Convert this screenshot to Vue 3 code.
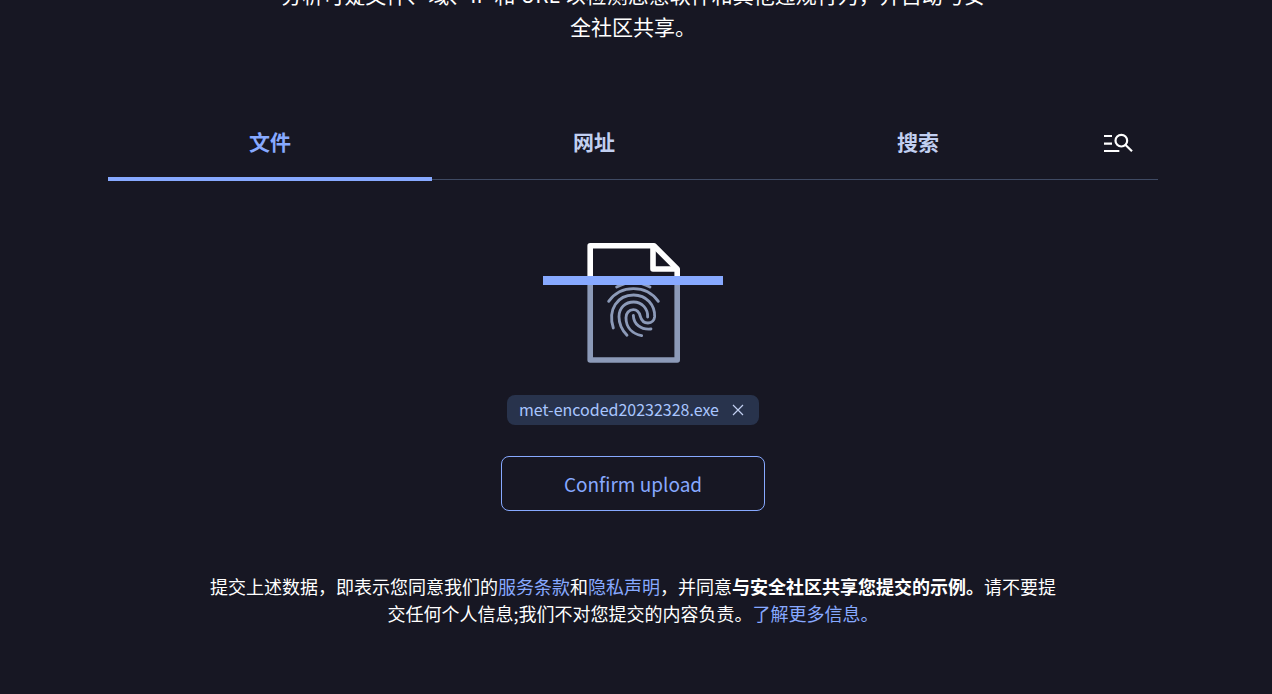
<script setup>
import { ref } from 'vue'

const tabs = ['文件', '网址', '搜索']
const active = ref(0)
const fileName = ref('met-encoded20232328.exe')
</script>

<template>
  <main class="page">
    <p class="intro">分析可疑文件、域、IP 和 URL 以检测恶意软件和其他违规行为，并自动与安全社区共享。</p>

    <nav class="tabs" role="tablist">
      <button
        v-for="(tab, i) in tabs"
        :key="tab"
        type="button"
        role="tab"
        class="tab"
        :class="{ active: active === i }"
        :aria-selected="active === i"
        @click="active = i"
      >{{ tab }}</button>
      <button type="button" class="advanced" aria-label="高级搜索">
        <svg width="30" height="20" viewBox="0 0 90 60" fill="none" stroke="#fff" stroke-width="6.5">
          <path d="M0 9H24M0 32H24M0 54H46" />
          <circle cx="52" cy="23" r="17.5" />
          <path d="M64 35L84 55" />
        </svg>
      </button>
    </nav>

    <section class="upload">
      <svg class="scan" width="180" height="120" viewBox="0 0 180 120" fill="none" stroke-linejoin="round">
        <g stroke="#fff" stroke-width="5.6">
          <path d="M47.2 36V2.8H111L134.2 26V36" />
          <path d="M110 3V26H134" />
        </g>
        <path d="M47.2 40V117H134.2V40" stroke="#8c9ab8" stroke-width="5.6" />
        <g transform="translate(-13 -13) scale(.3333)" stroke="#8c9ab8" stroke-width="8.5" stroke-linecap="round">
          <path d="M260 171Q310 144 360 171" />
          <path d="M236 214A92 92 0 0 1 385 214" />
          <path d="M250 294C232 238 263 195 311 195C350 195 375 226 374 260C373 270 366 279 354 279C340 279 334 270 331 259C328 247 322 239 310 239C297 239 288 250 288 263C288 292 307 311 335 317" />
          <path d="M291 316C275 299 267 282 267 260C267 234 286 216 311 216C336 216 354 236 353 261" />
          <path d="M310 256C311 283 333 300 363 297" />
        </g>
        <path d="M0 33H180V42H0Z" fill="#87a9ff" />
      </svg>

      <div v-if="fileName" class="chip">
        <span>{{ fileName }}</span>
        <button type="button" class="remove" aria-label="移除文件" @click="fileName = ''">
          <svg width="12" height="12" viewBox="0 0 12 12" fill="none" stroke="currentColor" stroke-width="1.2">
            <path d="M1 1L11 11M11 1L1 11" />
          </svg>
        </button>
      </div>

      <button type="button" class="confirm">Confirm upload</button>
    </section>

    <p class="terms">提交上述数据，即表示您同意我们的<a href="#terms">服务条款</a>和<a href="#privacy">隐私声明</a>，并同意<strong>与安全社区共享您提交的示例。</strong>请不要提交任何个人信息;我们不对您提交的内容负责。<a href="#more">了解更多信息。</a></p>
  </main>
</template>

<style>
body {
  margin: 0;
  background: #171723;
}
</style>

<style scoped>
.page {
  display: flow-root;
  box-sizing: border-box;
  min-height: 100vh;
  padding: 0 114px 0 108px;
  background: #171723;
  color: #fff;
  font-family: "Noto Sans CJK SC", sans-serif;
}

button {
  margin: 0;
  padding: 0;
  border: 0;
  background: none;
  font-family: inherit;
  cursor: pointer;
}

.intro {
  max-width: 712px;
  margin: -22px auto 0;
  font-size: 21px;
  line-height: 32px;
  text-align: center;
}

.tabs {
  display: flex;
  margin-top: 62px;
  background: linear-gradient(#3f4a63, #3f4a63) 0 75px / 100% 1px no-repeat;
}

.tab {
  flex: 1;
  height: 77px;
  border-bottom: 4px solid transparent;
  color: #c1cff0;
  font-size: 21px;
  font-weight: 700;
  line-height: 32px;
}

.tab.active {
  border-color: #87a9ff;
  color: #87a9ff;
}

.advanced {
  display: flex;
  align-items: center;
  justify-content: center;
  width: 78px;
  height: 77px;
}

.upload {
  display: flex;
  flex-direction: column;
  align-items: center;
  margin-top: 62px;
}

.chip {
  display: flex;
  align-items: center;
  gap: 12px;
  margin-top: 32px;
  padding: 2px 14px 4px 12px;
  border-radius: 8px;
  background: #28334c;
  color: #a9c6ff;
  font-size: 16px;
  line-height: 24px;
}

.remove {
  display: flex;
  padding: 2px 1px 0;
  color: #c1cff0;
}

.confirm {
  width: 264px;
  height: 55px;
  margin-top: 31px;
  border: 1px solid #87a9ff;
  border-radius: 8px;
  color: #87a9ff;
  font-size: 19px;
}

.terms {
  max-width: 850px;
  margin: 62px auto 0;
  font-size: 18px;
  line-height: 27px;
  text-align: center;
}

.terms a {
  color: #87a9ff;
  text-decoration: none;
}
</style>
